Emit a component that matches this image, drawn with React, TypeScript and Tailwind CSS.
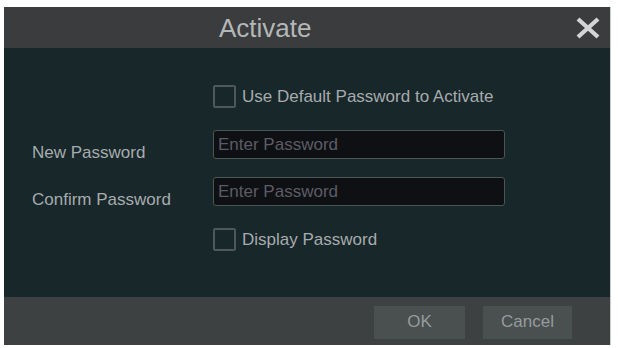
import React from "react";

const Checkbox = ({ label }: { label: string }) => (
  <label className="flex items-center gap-[6px] h-[23px] cursor-pointer">
    <span className="w-[23px] h-[23px] border-2 border-[#4e5858] rounded-[2px] bg-[#17272a]" />
    <span className="text-[17px] text-[#a7abad] leading-none">{label}</span>
  </label>
);

const PasswordInput = () => (
  <input
    type="password"
    placeholder="Enter Password"
    className="w-[292px] h-[29px] bg-[#0e1013] border border-[#4d5454] rounded-[3px] px-[4px] text-[17px] text-[#a7abad] placeholder:text-[#5c5c66] outline-none"
  />
);

const Row = ({ label, children }: { label?: string; children: React.ReactNode }) => (
  <div className="flex items-start h-[29px]">
    <div className="w-[181px] mt-[14px] text-[17px] leading-none text-[#a7abad]">{label}</div>
    {children}
  </div>
);

export default function App() {
  return (
    <div
      className="w-[618px] h-[348px] bg-white pt-[7px] pl-[4px]"
      style={{ fontFamily: '"Liberation Sans", Arial, sans-serif' }}
    >
      <div className="w-[607px] h-[338px] flex flex-col border-r border-[#c9cccc]">
        {/* header */}
        <div className="h-[41px] bg-[#3a3c3d] flex items-center">
          <h1 className="ml-[215px] text-[26px] text-[#b4b7b8] leading-none">Activate</h1>
          <button className="ml-auto mr-[9px] w-[26px] h-[22px] flex items-center justify-center">
            <svg width="26" height="22" viewBox="0 0 26 22">
              <path d="M3 2 L23 20 M23 2 L3 20" stroke="#d4d6d6" strokeWidth="4.2" strokeLinecap="butt" />
            </svg>
          </button>
        </div>

        {/* body */}
        <div className="flex-1 bg-[#17272a] pl-[28px] pt-[37px] flex flex-col">
          <div className="pl-[181px]">
            <Checkbox label="Use Default Password to Activate" />
          </div>
          <div className="mt-[22px]">
            <Row label="New Password">
              <PasswordInput />
            </Row>
          </div>
          <div className="mt-[18px]">
            <Row label="Confirm Password">
              <PasswordInput />
            </Row>
          </div>
          <div className="pl-[181px] mt-[22px]">
            <Checkbox label="Display Password" />
          </div>
        </div>

        {/* footer */}
        <div className="h-[48px] bg-[#3e4141] flex items-center justify-end gap-[18px] pr-[38px]">
          <button className="w-[91px] h-[33px] mt-[2px] bg-[#4a4f50] text-[17px] text-[#979b9c]">OK</button>
          <button className="w-[89px] h-[33px] mt-[2px] bg-[#4a4f50] text-[17px] text-[#979b9c]">Cancel</button>
        </div>
      </div>
    </div>
  );
}
